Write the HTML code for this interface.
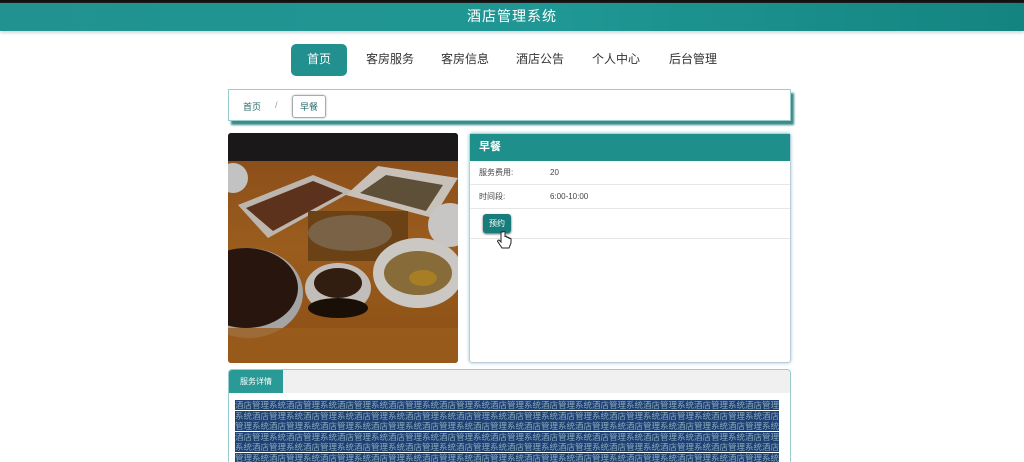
<!DOCTYPE html>
<html><head><meta charset="utf-8"><style>
*{margin:0;padding:0;box-sizing:border-box}
html,body{width:1024px;height:462px;overflow:hidden}
body{background:#fff;font-family:"Liberation Sans","Noto Sans CJK SC",sans-serif;position:relative}
.top{position:absolute;left:0;top:0;width:1024px;height:3px;background:#111}
.hdr{position:absolute;left:0;top:3px;width:1024px;height:28px;background:linear-gradient(90deg,#21928f,#1f9794 55%,#148480);color:#fff;font-size:14px;letter-spacing:1px;text-align:center;line-height:27px;box-shadow:0 2px 3px #cfd8dc}
.nav{position:absolute;top:44px;left:0;width:1024px}
.nav a{position:absolute;top:0;height:32px;line-height:30px;font-size:12px;color:#333;text-decoration:none}
.nav a.on{background:#22908f;color:#fff;border-radius:5px;width:56px;text-align:center}
.bc{position:absolute;left:228px;top:89px;width:563px;height:32px;border:1px solid #9cc;background:#fff;box-shadow:3px 4px 2px #3a8a8a}
.bc span{position:absolute;font-size:9px;color:#2a6a6a;top:10px}
.bc .cur{left:63px;top:5px;border:1px solid #aaa;border-radius:3px;padding:4px 7px;color:#2a6a6a;box-shadow:0 0 2px #bbb}
.img{position:absolute;left:228px;top:133px;width:230px;height:230px;border-radius:3px;overflow:hidden}
.panel{position:absolute;left:469px;top:133px;width:322px;height:230px;border:1px solid #bcd;border-radius:3px;box-shadow:0 0 3px #9cc}
.ph{height:27px;background:#1f8f8c;color:#fff;font-size:11px;font-weight:bold;line-height:27px;padding-left:9px}
.row{height:24px;border-bottom:1px solid #e6e6e6;font-size:8px;color:#444;line-height:24px;position:relative}
.row .k{position:absolute;left:9px}.row .v{position:absolute;left:80px}
.btn{position:absolute;left:13px;top:80px;width:28px;height:19px;background:#187c7c;color:#fff;font-size:8px;line-height:19px;text-align:center;border-radius:3px;box-shadow:0 1px 2px #555}
.line3{position:absolute;left:0;top:104px;width:100%;border-top:1px solid #e6e6e6}
.det{position:absolute;left:228px;top:369px;width:563px;height:93px;border:1px solid #9cc;border-bottom:none;border-radius:4px 4px 0 0;overflow:hidden}
.dh{height:23px;background:#f0f0f0;position:relative}
.dh span{position:absolute;left:0;top:0;height:23px;width:54px;background:#2a9a96;color:#fff;font-size:8px;line-height:23px;text-align:center}
.txt{position:absolute;left:6px;top:30px;width:548px;font-size:8.5px;line-height:10.5px;color:#8ab;word-break:break-all}
.txt span{background:#1e3f72}
</style></head><body>
<div class="top"></div>
<div class="hdr">酒店管理系统</div>
<div class="nav">
<a class="on" style="left:291px">首页</a>
<a style="left:366px">客房服务</a>
<a style="left:441px">客房信息</a>
<a style="left:516px">酒店公告</a>
<a style="left:592px">个人中心</a>
<a style="left:669px">后台管理</a>
</div>
<div class="bc"><span style="left:14px">首页</span><span style="left:46px;color:#999">/</span><span class="cur">早餐</span></div>
<div class="img"><svg width="230" height="230" viewBox="0 0 230 230">
<defs><linearGradient id="t" x1="0" y1="0" x2="0" y2="1"><stop offset="0" stop-color="#9a561c"/><stop offset=".5" stop-color="#b06a22"/><stop offset="1" stop-color="#a05a18"/></linearGradient></defs>
<rect width="230" height="230" fill="url(#t)"/>
<rect width="230" height="28" fill="#1e1c1c"/>
<polygon points="10,72 85,42 125,58 40,105" fill="#d8d0c8"/>
<polygon points="18,75 85,48 115,60 45,98" fill="#6a3a22"/>
<polygon points="118,62 150,33 230,45 205,85" fill="#e4dcd4"/>
<polygon points="132,60 158,42 215,52 198,78" fill="#6a5a40"/>
<rect x="80" y="78" width="100" height="50" fill="#7a4a1a"/>
<ellipse cx="122" cy="100" rx="42" ry="18" fill="#8a7050"/>
<ellipse cx="20" cy="160" rx="55" ry="45" fill="#bbb"/>
<ellipse cx="18" cy="155" rx="52" ry="40" fill="#2e1a10"/>
<ellipse cx="110" cy="155" rx="33" ry="25" fill="#ddd8d2"/>
<ellipse cx="110" cy="150" rx="24" ry="15" fill="#3a2214"/>
<ellipse cx="110" cy="175" rx="30" ry="10" fill="#1e1208"/>
<ellipse cx="190" cy="140" rx="45" ry="35" fill="#e8e4e0"/>
<ellipse cx="190" cy="140" rx="34" ry="22" fill="#9a7a40"/>
<ellipse cx="195" cy="145" rx="14" ry="8" fill="#c0902a"/>
<ellipse cx="222" cy="92" rx="22" ry="22" fill="#e4e2e0"/>
<ellipse cx="5" cy="45" rx="15" ry="15" fill="#ddd"/>
<rect y="195" width="230" height="35" fill="#b06a20" opacity=".8"/>
<rect width="230" height="230" fill="#000" opacity=".12"/>
</svg></div>
<div class="panel">
<div class="ph">早餐</div>
<div class="row"><span class="k">服务费用:</span><span class="v">20</span></div>
<div class="row"><span class="k">时间段:</span><span class="v">6:00-10:00</span></div>
<div class="btn">预约</div>
<div class="line3"></div>
<svg style="position:absolute;left:27px;top:96px" width="16" height="22" viewBox="0 0 16 22"><path d="M4 2v10l-2-2c-1 0-2 1-1 2l4 6h7l2-5V9c0-1-2-1-2 0V8c0-1-2-1-2 0V7c0-1-2-1-2 0V2c0-1-2-1-2 0z" fill="#fff" stroke="#222" stroke-width="1"/></svg>
</div>
<div class="det">
<div class="dh"><span>服务详情</span></div>
<div class="txt"><span>酒店管理系统酒店管理系统酒店管理系统酒店管理系统酒店管理系统酒店管理系统酒店管理系统酒店管理系统酒店管理系统酒店管理系统酒店管理系统酒店管理系统酒店管理系统酒店管理系统酒店管理系统酒店管理系统酒店管理系统酒店管理系统酒店管理系统酒店管理系统酒店管理系统酒店管理系统酒店管理系统酒店管理系统酒店管理系统酒店管理系统酒店管理系统酒店管理系统酒店管理系统酒店管理系统酒店管理系统酒店管理系统酒店管理系统酒店管理系统酒店管理系统酒店管理系统酒店管理系统酒店管理系统酒店管理系统酒店管理系统酒店管理系统酒店管理系统酒店管理系统酒店管理系统酒店管理系统酒店管理系统酒店管理系统酒店管理系统酒店管理系统酒店管理系统酒店管理系统酒店管理系统酒店管理系统酒店管理系统酒店管理系统酒店管理系统酒店管理系统酒店管理系统酒店管理系统酒店管理系统酒店管理系统酒店管理系统酒店管理系统酒店管理系统酒店管理系统酒店管理系统酒店管理系统酒店管理系统酒店管理系统酒店管理系统酒店管理系统酒店管理系统酒店管理系统酒店管理系统酒店管理系统酒店管理系统酒店管理系统酒店管理系统酒店管理系统酒店管理系统酒店管理系统</span></div>
</div>
</body></html>
